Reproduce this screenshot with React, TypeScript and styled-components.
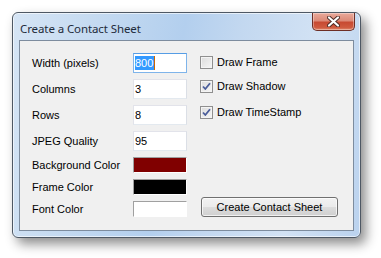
import styled, { createGlobalStyle } from 'styled-components';

const GlobalStyle = createGlobalStyle`
	html, body {
		margin: 0;
		padding: 0;
		background: #ffffff;
	}
	body {
		font-family: 'Liberation Sans', Arial, sans-serif;
	}
`;

const FIELDS = [
	{ label: 'Width (pixels)', value: '800', focused: true },
	{ label: 'Columns', value: '3' },
	{ label: 'Rows', value: '8' },
	{ label: 'JPEG Quality', value: '95' },
];

const COLORS = [
	{ label: 'Background Color', color: '#800000' },
	{ label: 'Frame Color', color: '#000000' },
	{ label: 'Font Color', color: '#ffffff' },
];

const OPTIONS = [
	{ label: 'Draw Frame', checked: false },
	{ label: 'Draw Shadow', checked: true },
	{ label: 'Draw TimeStamp', checked: true },
];

const CheckMark = () => (
	<svg width="9" height="9" viewBox="0 0 9 9">
		<path
			d="M1 4.5 L3.3 7 L8 1.2"
			fill="none"
			stroke="#4a5d9a"
			strokeWidth="1.8"
			strokeLinejoin="round"
		/>
	</svg>
);

const CloseGlyph = () => (
	<svg width="13" height="11" viewBox="0 0 13 11">
		<path
			d="M2 1.5 L11 9.5 M11 1.5 L2 9.5"
			stroke="#4b2a24"
			strokeWidth="4"
			strokeLinecap="round"
		/>
		<path
			d="M2 1.5 L11 9.5 M11 1.5 L2 9.5"
			stroke="#ffffff"
			strokeWidth="2.2"
			strokeLinecap="round"
		/>
	</svg>
);

const App = () => {
	return (
		<Page>
			<GlobalStyle />
			<Window>
				<TitleBar>
					<Title>Create a Contact Sheet</Title>
					<CloseButton>
						<CloseGlyph />
					</CloseButton>
				</TitleBar>
				<Client>
					<FieldGrid>
						{FIELDS.map((f) => (
							<FieldRow key={f.label}>
								<Label>{f.label}</Label>
								<TextBox focused={f.focused}>
									{f.focused ? <Selected>{f.value}</Selected> : f.value}
									{f.focused && <Caret />}
								</TextBox>
							</FieldRow>
						))}
						{COLORS.map((c) => (
							<FieldRow key={c.label}>
								<Label>{c.label}</Label>
								<Swatch color={c.color} />
							</FieldRow>
						))}
					</FieldGrid>
					<RightColumn>
						<Options>
							{OPTIONS.map((o) => (
								<Option key={o.label}>
									<Box>{o.checked && <CheckMark />}</Box>
									<span>{o.label}</span>
								</Option>
							))}
						</Options>
						<Button>Create Contact Sheet</Button>
					</RightColumn>
				</Client>
			</Window>
		</Page>
	);
};

const Page = styled.div`
	width: 381px;
	height: 258px;
	padding: 12px 0 0 12px;
	box-sizing: border-box;
	background: #ffffff;
`;

const Window = styled.div`
	width: 349px;
	height: 226px;
	box-sizing: border-box;
	border: 1px solid #4e5864;
	border-radius: 6px;
	display: flex;
	flex-direction: column;
	padding: 0 6px 6px 6px;
	background: linear-gradient(
		100deg,
		#d6e5f5 0%,
		#c6dbf1 20%,
		#b3cfee 45%,
		#c3d8f0 60%,
		#d2e2f4 80%,
		#bad2ee 100%
	);
	box-shadow: 5px 6px 12px rgba(0, 0, 0, 0.45),
		inset 0 0 0 1px rgba(255, 255, 255, 0.6);
`;

const TitleBar = styled.div`
	height: 27px;
	display: flex;
	align-items: flex-start;
	justify-content: space-between;
`;

const Title = styled.div`
	font-family: 'Noto Sans', 'Open Sans', sans-serif;
	font-size: 11.5px;
	color: #1e2b3a;
	padding: 8px 0 0 1px;
	letter-spacing: -0.1px;
`;

const CloseButton = styled.div`
	width: 43px;
	height: 18px;
	margin-right: -1px;
	box-sizing: border-box;
	border: 1px solid #6d2e25;
	border-top: none;
	border-radius: 0 0 5px 5px;
	background: linear-gradient(
		180deg,
		#e9a99a 0%,
		#dc8a78 45%,
		#c74a32 55%,
		#cf5a3f 85%,
		#e08a6e 100%
	);
	box-shadow: inset 0 0 0 1px rgba(255, 255, 255, 0.35);
	display: flex;
	align-items: center;
	justify-content: center;
`;

const Client = styled.div`
	flex: 1;
	background: #f0f0f0;
	border: 1px solid #7d8c9e;
	display: flex;
	padding: 12px 0 0 12px;
	box-sizing: border-box;
	font-size: 11px;
	color: #000;
`;

const FieldGrid = styled.div`
	flex: none;
	display: flex;
	flex-direction: column;
	gap: 6px;
	width: 155px;
`;

const FieldRow = styled.div`
	display: grid;
	grid-template-columns: 101px 54px;
	align-items: center;
`;

const Label = styled.div`
	font-size: 11px;
	line-height: 13px;
	padding-top: 1px;
`;

const TextBox = styled.div<{ focused?: boolean }>`
	height: 20px;
	box-sizing: border-box;
	background: #fff;
	border: 1px solid ${(p) => (p.focused ? '#7eb4ea' : '#abadb3')};
	border-top-color: ${(p) => (p.focused ? '#569de5' : '#e2e3ea')};
	border-left-color: ${(p) => (p.focused ? '#7eb4ea' : '#e2e3ea')};
	border-bottom-color: ${(p) => (p.focused ? '#7eb4ea' : '#e3e9ef')};
	border-right-color: ${(p) => (p.focused ? '#7eb4ea' : '#dbdfe6')};
	padding: 0 0 0 1px;
	display: flex;
	align-items: center;
	font-size: 11px;
	line-height: 13px;
`;

const Selected = styled.span`
	background: #3399ff;
	color: #fff;
	padding: 0 1px 0 0;
	line-height: 14px;
`;

const Caret = styled.span`
	width: 1px;
	height: 14px;
	background: #cc6600;
`;

const Swatch = styled.div<{ color: string }>`
	height: 16px;
	box-sizing: border-box;
	background: ${(p) => p.color};
	border-top: 1px solid #a0a0a0;
	border-left: 1px solid #a0a0a0;
	border-right: 1px solid #ffffff;
	border-bottom: 1px solid #ffffff;
`;

const RightColumn = styled.div`
	flex: 1;
	min-width: 0;
	display: flex;
	flex-direction: column;
	justify-content: space-between;
	padding: 3px 0 13px 13px;
`;

const Options = styled.div`
	display: flex;
	flex-direction: column;
	gap: 11px;
`;

const Option = styled.div`
	display: flex;
	align-items: center;
	gap: 4px;
	font-size: 11px;
	line-height: 13px;
	&:nth-child(2) {
		margin-bottom: 2px;
	}
`;

const Box = styled.div`
	width: 13px;
	height: 13px;
	box-sizing: border-box;
	border: 1px solid #8f8f8f;
	background: linear-gradient(135deg, #dcdcdc 0%, #f6f6f6 100%);
	box-shadow: inset 0 0 0 1px #f4f4f4;
	display: flex;
	align-items: center;
	justify-content: center;
`;

const Button = styled.div`
	width: 137px;
	height: 20px;
	margin-left: 1px;
	box-sizing: border-box;
	border: 1px solid #707070;
	border-radius: 3px;
	background: linear-gradient(180deg, #f2f2f2 0%, #ebebeb 50%, #dddddd 51%, #cfcfcf 100%);
	box-shadow: inset 0 0 0 1px rgba(255, 255, 255, 0.7);
	display: flex;
	align-items: center;
	justify-content: center;
	font-size: 11px;
`;

export default App;
